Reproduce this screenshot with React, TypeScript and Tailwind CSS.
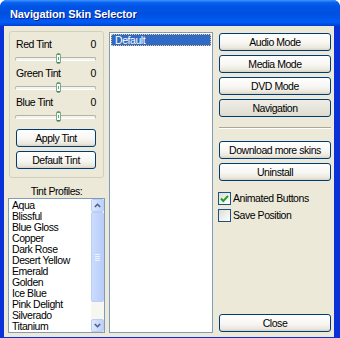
import React from "react";

const PROFILES = [
  "Aqua",
  "Blissful",
  "Blue Gloss",
  "Copper",
  "Dark Rose",
  "Desert Yellow",
  "Emerald",
  "Golden",
  "Ice Blue",
  "Pink Delight",
  "Silverado",
  "Titanium",
];

const BTN =
  "block w-full h-[18px] rounded-[3px] border border-[#003c74] bg-[linear-gradient(to_bottom,#ffffff_0%,#f7f6f2_55%,#ebe8de_85%,#d8d2c6_100%)] text-[10.5px] leading-[16px] text-black text-center";

function Slider({ label }: { label: string }) {
  return (
    <div>
      <div className="flex justify-between h-[13px] leading-[13px] pl-[6px] pr-[7px]">
        <span>{label}</span>
        <span>0</span>
      </div>
      <div className="relative mt-[2px] mb-[3px] h-[11px] ml-[5px] mr-[7px] flex items-center">
        {/* track */}
        <div className="w-full h-[4px] rounded-[2px] border border-[#b5b3a6] border-b-white bg-[#f4f3ee]" />
        {/* thumb */}
        <div className="absolute left-[41px] top-0 w-[5px] h-[11px] rounded-[2px] border border-[#8d9aa7] bg-white flex flex-col justify-between">
          <div className="h-[1px] bg-[#21c121]" />
          <div className="h-[3px] mx-[1px] bg-[#3ec43e]" />
          <div className="h-[1px] bg-[#1fa21f]" />
        </div>
      </div>
    </div>
  );
}

function Checkbox({ label, checked }: { label: string; checked?: boolean }) {
  return (
    <div className="flex items-center h-[13px]">
      <div className="w-[13px] h-[13px] border border-[#1c5180] bg-[linear-gradient(135deg,#dcdcd7_0%,#ffffff_100%)] flex items-center justify-center">
        {checked && (
          <svg width="9" height="9" viewBox="0 0 9 9">
            <path d="M1 4.5 L3.3 7 L8 1.8" stroke="#21a121" strokeWidth="2" fill="none" />
          </svg>
        )}
      </div>
      <span className="ml-[2px] leading-[13px]">{label}</span>
    </div>
  );
}

function ScrollBar() {
  return (
    <div className="w-[13px] h-full flex flex-col bg-[#f7f6f1]">
      <div className="h-[13px] rounded-[2px] border border-[#b9cdf7] bg-[linear-gradient(to_right,#dde8fe,#bdd0fa)] flex items-center justify-center">
        <svg width="7" height="5" viewBox="0 0 7 5">
          <path d="M0.8 4 L3.5 1.3 L6.2 4" stroke="#4d6185" strokeWidth="1.6" fill="none" />
        </svg>
      </div>
      <div className="h-[90px] rounded-[2px] border border-[#b9cdf7] bg-[linear-gradient(to_right,#cbdcfd,#b8cdf9)] flex flex-col items-center justify-center gap-[1px]">
        <div className="w-[5px] h-[1px] bg-[#eef3fe]" />
        <div className="w-[5px] h-[1px] bg-[#eef3fe]" />
        <div className="w-[5px] h-[1px] bg-[#eef3fe]" />
        <div className="w-[5px] h-[1px] bg-[#eef3fe]" />
      </div>
      <div className="flex-1" />
      <div className="h-[13px] rounded-[2px] border border-[#b9cdf7] bg-[linear-gradient(to_right,#dde8fe,#bdd0fa)] flex items-center justify-center">
        <svg width="7" height="5" viewBox="0 0 7 5">
          <path d="M0.8 1 L3.5 3.7 L6.2 1" stroke="#4d6185" strokeWidth="1.6" fill="none" />
        </svg>
      </div>
    </div>
  );
}

export default function App() {
  return (
    <div className="w-[340px] h-[338px] bg-white font-['Liberation_Sans',Arial,sans-serif] text-[10.5px] tracking-[-0.45px] text-black">
      <div className="w-full h-full flex flex-col rounded-t-[7px] overflow-hidden bg-[#0831d9]">
        {/* Title bar */}
        <div className="h-[26px] shrink-0 flex items-center pl-[10px] pt-[3px] bg-[linear-gradient(to_bottom,#3d95ff_0%,#0a62f0_10%,#0054e3_25%,#0050e0_55%,#005cf5_85%,#003fd0_100%)]">
          <span className="font-bold text-[11px] tracking-[-0.1px] text-white [text-shadow:1px_1px_0_#0a1883]">
            Navigation Skin Selector
          </span>
        </div>

        {/* Client */}
        <div className="flex-1 ml-[4px] mr-[6px] mb-[5px] bg-[#ece9d8] flex pt-[5px] pl-[4px] pr-[3px] pb-[4px]">
          {/* Left column */}
          <div className="w-[97px] flex flex-col">
            <div className="mx-[1px] h-[147px] rounded-[3px] border border-[#d0d0bf] pt-[6px]">
              <Slider label="Red Tint" />
              <Slider label="Green Tint" />
              <Slider label="Blue Tint" />
              <div className="mt-[7px] pl-[6px] pr-[7px] flex flex-col gap-[4px]">
                <button type="button" className={BTN}>
                  Apply Tint
                </button>
                <button type="button" className={BTN}>
                  Default Tint
                </button>
              </div>
            </div>
            <div className="mt-[7px] h-[13px] leading-[13px] text-center">Tint Profiles:</div>
            <div className="flex-1 border border-[#7f9db9] bg-white flex overflow-hidden">
              <div className="flex-1 pl-[3px] pt-[1px] overflow-hidden">
                {PROFILES.map((p) => (
                  <div key={p} className="h-[11px] leading-[11px] whitespace-nowrap">
                    {p}
                  </div>
                ))}
              </div>
              <ScrollBar />
            </div>
          </div>

          {/* Middle skins list */}
          <div className="ml-[4px] mt-[1px] w-[104px] border border-[#7f9db9] bg-white p-[1px]">
            <div className="h-[12px] leading-[11px] pl-[3px] bg-[#316ac5] text-white border border-dotted border-[#f3c776]">
              Default
            </div>
          </div>

          {/* Right column */}
          <div className="ml-[6px] mt-[2px] w-[112px] flex flex-col">
            <div className="flex flex-col gap-[4px]">
              <button type="button" className={BTN}>
                Audio Mode
              </button>
              <button type="button" className={BTN}>
                Media Mode
              </button>
              <button type="button" className={BTN}>
                DVD Mode
              </button>
              <button
                type="button"
                className="block w-full h-[18px] rounded-[3px] border border-[#003c74] bg-[linear-gradient(to_bottom,#eeede6_0%,#e6e3d9_60%,#dedbd0_100%)] text-[10.5px] leading-[16px] text-black text-center"
              >
                Navigation
              </button>
            </div>
            <div className="mt-[10px] h-[2px] border-t border-[#aca899] border-b border-b-white" />
            <div className="mt-[12px] flex flex-col gap-[4px]">
              <button type="button" className={BTN}>
                Download more skins
              </button>
              <button type="button" className={BTN}>
                Uninstall
              </button>
            </div>
            <div className="mt-[11px] -ml-[1px] flex flex-col gap-[4px]">
              <Checkbox label="Animated Buttons" checked />
              <Checkbox label="Save Position" />
            </div>
            <div className="flex-1" />
            <button type="button" className={BTN + " mb-[1px]"}>
              Close
            </button>
          </div>
        </div>
      </div>
    </div>
  );
}
